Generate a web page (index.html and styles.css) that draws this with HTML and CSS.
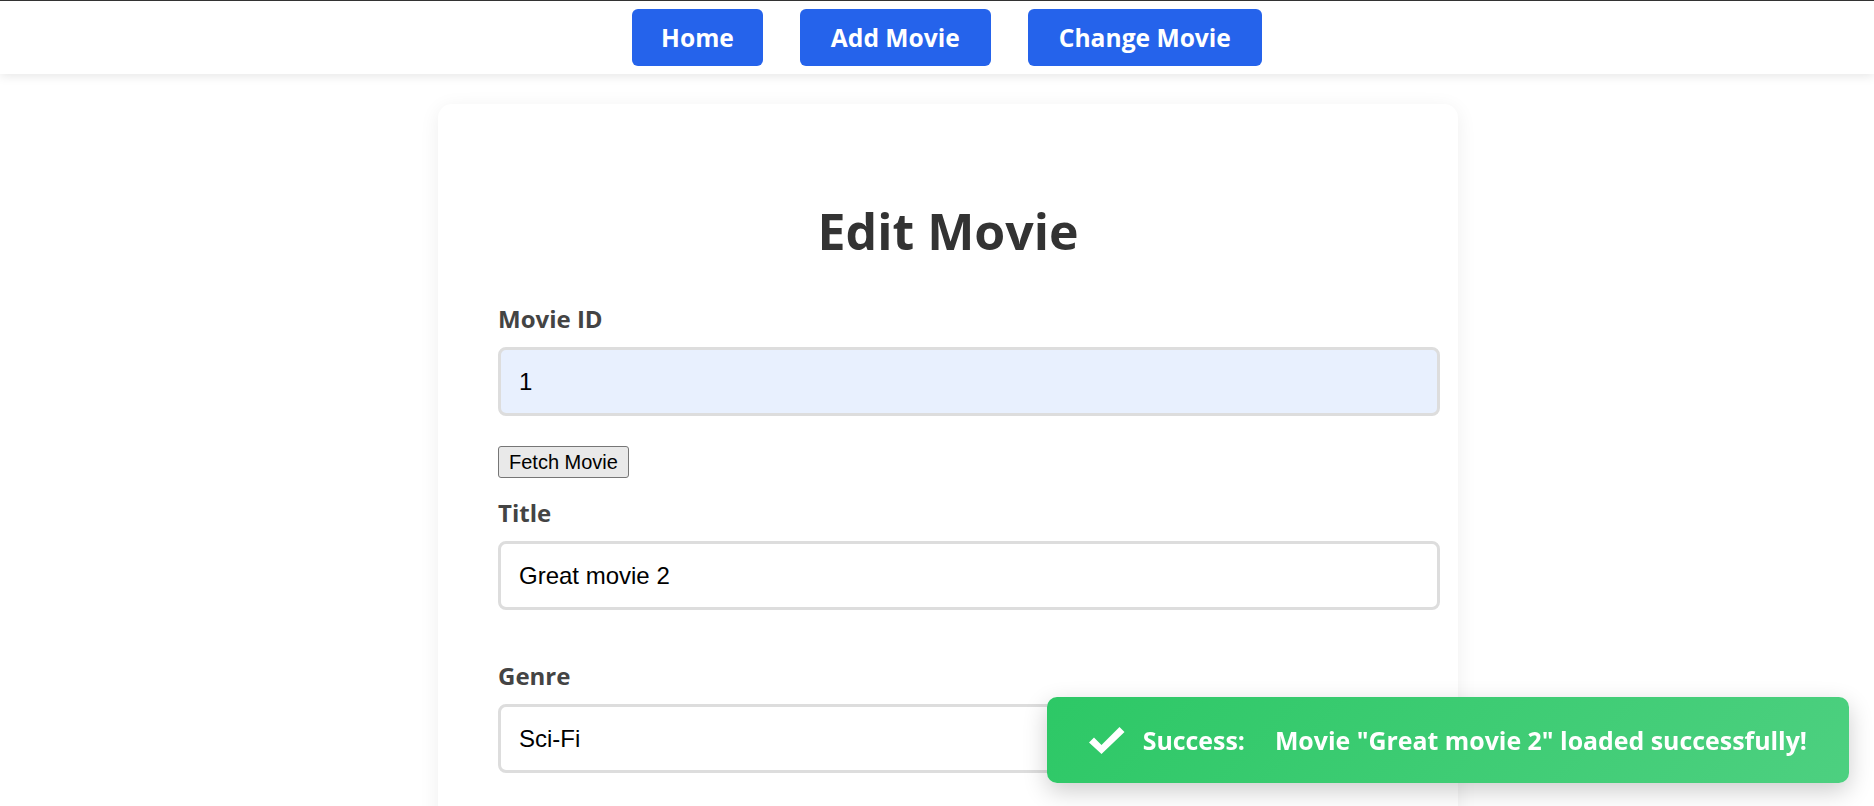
FILE: index.html
```html
<!DOCTYPE html>
<html lang="en">
<head>
<meta charset="utf-8">
<title>Edit Movie</title>
<link rel="stylesheet" href="styles.css">
</head>
<body>
<nav class="topnav">
  <a class="nav-btn" href="#">Home</a>
  <a class="nav-btn" href="#">Add Movie</a>
  <a class="nav-btn" href="#">Change Movie</a>
</nav>
<main class="page">
  <section class="card">
    <h1 class="card-title">Edit Movie</h1>
    <form class="form">
      <label class="field-label" for="movie-id">Movie ID</label>
      <input class="field-input field-autofill" id="movie-id" type="text" value="1">
      <button class="fetch-btn" type="button">Fetch Movie</button>
      <label class="field-label" for="title">Title</label>
      <input class="field-input" id="title" type="text" value="Great movie 2">
      <label class="field-label field-label-spaced" for="genre">Genre</label>
      <input class="field-input" id="genre" type="text" value="Sci-Fi">
    </form>
  </section>
</main>
<div class="toast">
  <svg class="toast-icon" viewBox="0 0 36 28" aria-hidden="true"><polygon fill="#fff" points="0,16.5 5,11.5 12.5,19 30.5,1 35.5,6 12.5,28"/></svg>
  <span class="toast-label">Success:</span>
  <span class="toast-msg">Movie "Great movie 2" loaded successfully!</span>
</div>
</body>
</html>
```
FILE: styles.css
```css
* { box-sizing: content-box; }
html, body { margin: 0; padding: 0; background: #fff; }
body {
  font-family: "Open Sans", "DejaVu Sans", sans-serif;
  border-top: 1px solid #333;
  overflow: hidden;
  height: 805px;
}
.topnav {
  display: flex;
  justify-content: center;
  gap: 37px;
  padding: 8px 0 8px 20px;
  background: #fff;
  box-shadow: 0 2px 10px rgba(0,0,0,0.1);
  position: relative;
  z-index: 1;
}
.nav-btn {
  display: inline-flex;
  align-items: center;
  height: 57px;
  padding: 0 31px;
  background: #2563eb;
  color: #fff;
  text-decoration: none;
  font-weight: 700;
  font-size: 24.6px;
  border-radius: 6px;
}
.nav-btn:first-child { padding: 0 29px; }
.page {
  padding-left: 22px;
  padding-top: 30px;
}
.card {
  width: 900px;
  margin: 0 auto;
  padding: 93px 60px 160px;
  background: #fff;
  border-radius: 14px;
  box-shadow: 0 4px 20px rgba(0,0,0,0.07);
}
.card-title {
  margin: 0 0 37px;
  text-align: center;
  font-size: 50px;
  font-weight: 700;
  line-height: 68px;
  color: #333;
}
.form { display: flex; flex-direction: column; align-items: flex-start; }
.field-label {
  font-size: 24px;
  font-weight: 700;
  color: #444;
  line-height: 33px;
  margin-bottom: 12px;
}
.field-label-spaced { margin-top: 49px; }
.field-input {
  width: 900px;
  padding: 18px;
  border: 3px solid #ddd;
  border-radius: 8px;
  font-family: "Liberation Sans", Arial, sans-serif;
  font-size: 24px;
  line-height: 27px;
  color: #000;
  background: #fff;
  outline: none;
}
.field-autofill { background: #e8f0fe; }
.fetch-btn {
  margin: 30px 0 18px;
  padding: 3px 10px;
  font-family: "Liberation Sans", Arial, sans-serif;
  font-size: 20px;
  line-height: 24px;
  color: #000;
  background: #e9e9e9;
  border: 1px solid #767676;
  border-radius: 3px;
}
.toast {
  position: fixed;
  right: 25px;
  bottom: 23px;
  height: 86px;
  display: flex;
  align-items: center;
  padding: 0 42px;
  border-radius: 10px;
  background: linear-gradient(135deg, #2dc866, #4dd080);
  box-shadow: 0 8px 24px rgba(0,0,0,0.2);
  color: #fff;
  font-weight: 700;
  font-size: 24.9px;
}
.toast-icon { width: 36px; height: 28px; margin-right: 18px; flex: none; }
.toast-label { margin-right: 30px; }
```
